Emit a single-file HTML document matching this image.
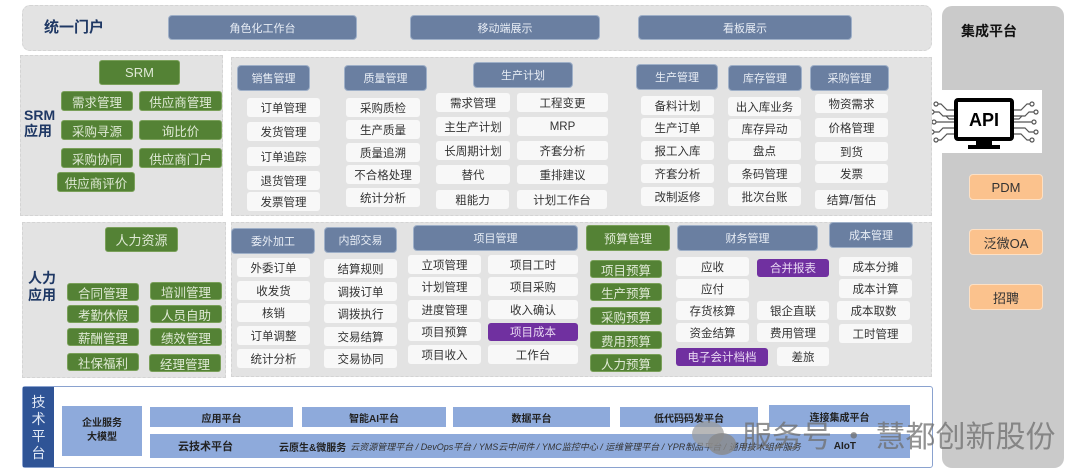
<!DOCTYPE html>
<html><head><meta charset="utf-8"><style>
*{margin:0;padding:0;box-sizing:border-box}
body{width:1080px;height:475px;background:#fff;position:relative;overflow:hidden;font-family:"Liberation Sans","Noto Sans CJK SC",sans-serif}
div{position:absolute}
.p{background:#e3e3e3;border:1px dashed #d4d4d4}
.h{background:#6a7fa1;color:#e8edf5;font-size:11px;text-align:center;border-radius:4px;border:1px solid #9fb0c8;display:flex;align-items:center;justify-content:center}
.i{background:#f8f8f8;color:#333;font-size:11.5px;text-align:center;border-radius:3px;display:flex;align-items:center;justify-content:center}
.g{background:#548235;color:#dfe9d5;font-size:12.5px;border-radius:3px;display:flex;align-items:center;justify-content:center;border:1px solid #7aa05a}
.u{background:#7030a0;color:#e8d8f2;font-size:11.5px;border-radius:3px;display:flex;align-items:center;justify-content:center}
.o{background:#fbc28d;color:#333;font-size:13px;border-radius:4px;border:1px solid #fde0c4;display:flex;align-items:center;justify-content:center}
.b{background:#8eaadb;color:#222;font-size:10px;font-weight:bold;display:flex;align-items:center;justify-content:center}
.t{font-weight:bold;color:#1f3864}
</style></head><body>
<div class="p" style="left:22px;top:5px;width:910px;height:46px;border-radius:8px"></div>
<div class="t" style="left:44px;top:16px;font-size:15px;color:#1f3864">统一门户</div>
<div class="h" style="left:168px;top:15px;width:189px;height:25px">角色化工作台</div>
<div class="h" style="left:410px;top:15px;width:190px;height:25px">移动端展示</div>
<div class="h" style="left:638px;top:15px;width:214px;height:25px">看板展示</div>
<div style="left:942px;top:6px;width:122px;height:462px;background:#cacaca;border-radius:10px"></div>
<div style="left:961px;top:21px;font-size:14px;font-weight:bold;color:#111">集成平台</div>
<div style="left:926px;top:90px;width:116px;height:63px;background:#fff">
<svg width="116" height="63" viewBox="0 0 116 63"><g stroke="#555" fill="none" stroke-width="1.2">
<path d="M29 20h-8l-6-6h-4M29 26h-12l-4-4h-6M29 32h-20M29 38h-12l-4 4h-6M29 44h-8l-6 6h-4M29 29h-6l-3-3"/>
<path d="M87 20h8l6-6h4M87 26h12l4-4h6M87 32h20M87 38h12l4 4h6M87 44h8l6 6h4M87 29h6l3-3"/>
<g fill="#fff"><circle cx="10" cy="14" r="2"/><circle cx="6" cy="22" r="2"/><circle cx="8" cy="32" r="2"/><circle cx="6" cy="42" r="2"/><circle cx="10" cy="50" r="2"/><circle cx="106" cy="14" r="2"/><circle cx="110" cy="22" r="2"/><circle cx="108" cy="32" r="2"/><circle cx="110" cy="42" r="2"/><circle cx="106" cy="50" r="2"/></g></g>
<rect x="30" y="10" width="56" height="39" fill="#fff" stroke="#000" stroke-width="4" rx="2"/>
<rect x="50" y="49" width="16" height="7" fill="#000"/><rect x="42" y="55" width="32" height="4" fill="#000"/>
<text x="58" y="36" text-anchor="middle" font-family="Liberation Sans" font-weight="bold" font-size="18" fill="#000">API</text></svg></div>
<div class="o" style="left:969px;top:174px;width:74px;height:26px">PDM</div>
<div class="o" style="left:969px;top:229px;width:74px;height:26px">泛微OA</div>
<div class="o" style="left:969px;top:284px;width:74px;height:26px">招聘</div>
<div class="p" style="left:20px;top:55px;width:203px;height:161px"></div>
<div class="t" style="left:24px;top:107px;font-size:14px;line-height:16px">SRM<br>应用</div>
<div class="g" style="left:99px;top:60px;width:81px;height:25px;font-size:13px">SRM</div>
<div class="g" style="left:61px;top:91px;width:72px;height:20px">需求管理</div>
<div class="g" style="left:139px;top:91px;width:83px;height:20px">供应商管理</div>
<div class="g" style="left:61px;top:120px;width:72px;height:20px">采购寻源</div>
<div class="g" style="left:139px;top:120px;width:83px;height:20px">询比价</div>
<div class="g" style="left:61px;top:148px;width:72px;height:20px">采购协同</div>
<div class="g" style="left:139px;top:148px;width:83px;height:20px">供应商门户</div>
<div class="g" style="left:57px;top:172px;width:78px;height:20px">供应商评价</div>
<div class="p" style="left:231px;top:57px;width:701px;height:159px"></div>
<div class="h" style="left:237px;top:65px;width:73px;height:26px">销售管理</div>
<div class="h" style="left:344px;top:65px;width:83px;height:26px">质量管理</div>
<div class="h" style="left:473px;top:62px;width:100px;height:26px">生产计划</div>
<div class="h" style="left:636px;top:64px;width:82px;height:26px">生产管理</div>
<div class="h" style="left:728px;top:65px;width:74px;height:26px">库存管理</div>
<div class="h" style="left:810px;top:65px;width:79px;height:26px">采购管理</div>
<div class="i" style="left:247px;top:98px;width:73px;height:19px">订单管理</div>
<div class="i" style="left:247px;top:122px;width:73px;height:19px">发货管理</div>
<div class="i" style="left:247px;top:147px;width:73px;height:19px">订单追踪</div>
<div class="i" style="left:247px;top:171px;width:73px;height:19px">退货管理</div>
<div class="i" style="left:247px;top:192px;width:73px;height:19px">发票管理</div>
<div class="i" style="left:346px;top:98px;width:74px;height:19px">采购质检</div>
<div class="i" style="left:346px;top:120px;width:74px;height:19px">生产质量</div>
<div class="i" style="left:346px;top:143px;width:74px;height:19px">质量追溯</div>
<div class="i" style="left:346px;top:165px;width:74px;height:19px">不合格处理</div>
<div class="i" style="left:346px;top:188px;width:74px;height:19px">统计分析</div>
<div class="i" style="left:436px;top:93px;width:74px;height:19px">需求管理</div>
<div class="i" style="left:436px;top:117px;width:74px;height:19px">主生产计划</div>
<div class="i" style="left:436px;top:141px;width:74px;height:19px">长周期计划</div>
<div class="i" style="left:436px;top:165px;width:74px;height:19px">替代</div>
<div class="i" style="left:436px;top:190px;width:73px;height:19px">粗能力</div>
<div class="i" style="left:517px;top:93px;width:91px;height:19px">工程变更</div>
<div class="i" style="left:517px;top:117px;width:91px;height:19px">MRP</div>
<div class="i" style="left:517px;top:141px;width:91px;height:19px">齐套分析</div>
<div class="i" style="left:517px;top:165px;width:91px;height:19px">重排建议</div>
<div class="i" style="left:517px;top:190px;width:90px;height:19px">计划工作台</div>
<div class="i" style="left:641px;top:96px;width:73px;height:19px">备料计划</div>
<div class="i" style="left:641px;top:118px;width:73px;height:19px">生产订单</div>
<div class="i" style="left:641px;top:141px;width:73px;height:19px">报工入库</div>
<div class="i" style="left:641px;top:164px;width:73px;height:19px">齐套分析</div>
<div class="i" style="left:641px;top:187px;width:73px;height:19px">改制返修</div>
<div class="i" style="left:728px;top:97px;width:73px;height:19px">出入库业务</div>
<div class="i" style="left:728px;top:119px;width:73px;height:19px">库存异动</div>
<div class="i" style="left:728px;top:141px;width:73px;height:19px">盘点</div>
<div class="i" style="left:728px;top:164px;width:73px;height:19px">条码管理</div>
<div class="i" style="left:728px;top:187px;width:73px;height:19px">批次台账</div>
<div class="i" style="left:815px;top:94px;width:73px;height:19px">物资需求</div>
<div class="i" style="left:815px;top:118px;width:73px;height:19px">价格管理</div>
<div class="i" style="left:815px;top:142px;width:73px;height:19px">到货</div>
<div class="i" style="left:815px;top:164px;width:73px;height:19px">发票</div>
<div class="i" style="left:815px;top:190px;width:73px;height:19px">结算/暂估</div>
<div class="p" style="left:22px;top:222px;width:204px;height:156px"></div>
<div class="t" style="left:28px;top:270px;font-size:14px;line-height:17px">人力<br>应用</div>
<div class="g" style="left:105px;top:227px;width:73px;height:25px;font-size:13px">人力资源</div>
<div class="g" style="left:67px;top:283px;width:72px;height:18px">合同管理</div>
<div class="g" style="left:150px;top:282px;width:72px;height:18px">培训管理</div>
<div class="g" style="left:67px;top:305px;width:72px;height:18px">考勤休假</div>
<div class="g" style="left:150px;top:305px;width:72px;height:18px">人员自助</div>
<div class="g" style="left:67px;top:328px;width:72px;height:18px">薪酬管理</div>
<div class="g" style="left:150px;top:328px;width:72px;height:18px">绩效管理</div>
<div class="g" style="left:67px;top:353px;width:72px;height:18px">社保福利</div>
<div class="g" style="left:149px;top:354px;width:72px;height:18px">经理管理</div>
<div class="p" style="left:231px;top:222px;width:701px;height:155px"></div>
<div class="h" style="left:231px;top:228px;width:84px;height:26px">委外加工</div>
<div class="h" style="left:324px;top:227px;width:73px;height:26px">内部交易</div>
<div class="h" style="left:413px;top:225px;width:165px;height:26px">项目管理</div>
<div class="g" style="left:586px;top:225px;width:84px;height:26px;font-size:12px">预算管理</div>
<div class="h" style="left:677px;top:225px;width:141px;height:26px">财务管理</div>
<div class="h" style="left:829px;top:222px;width:84px;height:26px">成本管理</div>
<div class="i" style="left:237px;top:258px;width:73px;height:19px">外委订单</div>
<div class="i" style="left:237px;top:281px;width:73px;height:19px">收发货</div>
<div class="i" style="left:237px;top:303px;width:73px;height:19px">核销</div>
<div class="i" style="left:237px;top:326px;width:73px;height:19px">订单调整</div>
<div class="i" style="left:237px;top:349px;width:73px;height:19px">统计分析</div>
<div class="i" style="left:324px;top:259px;width:73px;height:19px">结算规则</div>
<div class="i" style="left:324px;top:282px;width:73px;height:19px">调拨订单</div>
<div class="i" style="left:324px;top:304px;width:73px;height:19px">调拨执行</div>
<div class="i" style="left:324px;top:327px;width:73px;height:19px">交易结算</div>
<div class="i" style="left:324px;top:349px;width:73px;height:19px">交易协同</div>
<div class="i" style="left:408px;top:255px;width:73px;height:19px">立项管理</div>
<div class="i" style="left:408px;top:277px;width:73px;height:19px">计划管理</div>
<div class="i" style="left:408px;top:300px;width:73px;height:19px">进度管理</div>
<div class="i" style="left:408px;top:322px;width:73px;height:19px">项目预算</div>
<div class="i" style="left:408px;top:345px;width:73px;height:19px">项目收入</div>
<div class="i" style="left:488px;top:255px;width:90px;height:19px">项目工时</div>
<div class="i" style="left:488px;top:277px;width:90px;height:19px">项目采购</div>
<div class="i" style="left:488px;top:300px;width:90px;height:19px">收入确认</div>
<div class="u" style="left:488px;top:323px;width:90px;height:18px">项目成本</div>
<div class="i" style="left:488px;top:345px;width:90px;height:19px">工作台</div>
<div class="g" style="left:590px;top:260px;width:72px;height:18px">项目预算</div>
<div class="g" style="left:590px;top:283px;width:72px;height:18px">生产预算</div>
<div class="g" style="left:590px;top:307px;width:72px;height:18px">采购预算</div>
<div class="g" style="left:590px;top:331px;width:72px;height:18px">费用预算</div>
<div class="g" style="left:590px;top:354px;width:72px;height:18px">人力预算</div>
<div class="i" style="left:676px;top:257px;width:73px;height:19px">应收</div>
<div class="i" style="left:676px;top:279px;width:73px;height:19px">应付</div>
<div class="i" style="left:676px;top:301px;width:73px;height:19px">存货核算</div>
<div class="i" style="left:676px;top:323px;width:73px;height:19px">资金结算</div>
<div class="u" style="left:757px;top:259px;width:72px;height:18px">合并报表</div>
<div class="i" style="left:757px;top:301px;width:72px;height:19px">银企直联</div>
<div class="i" style="left:757px;top:323px;width:72px;height:19px">费用管理</div>
<div class="u" style="left:676px;top:348px;width:92px;height:18px">电子会计档档</div>
<div class="i" style="left:777px;top:347px;width:52px;height:19px">差旅</div>
<div class="i" style="left:839px;top:257px;width:73px;height:19px">成本分摊</div>
<div class="i" style="left:839px;top:279px;width:73px;height:19px">成本计算</div>
<div class="i" style="left:837px;top:301px;width:73px;height:19px">成本取数</div>
<div class="i" style="left:839px;top:324px;width:73px;height:19px">工时管理</div>
<div style="left:22px;top:386px;width:911px;height:82px;border:1.5px solid #8aa2cf;border-radius:3px;background:#fff"></div>
<div style="left:23px;top:387px;width:31px;height:80px;background:#2f5496;color:#e0e8f5;font-size:14px;line-height:17px;text-align:center;padding-top:7px">技<br>术<br>平<br>台</div>
<div class="b" style="left:62px;top:406px;width:80px;height:50px;flex-direction:column;line-height:14px"><span>企业服务</span><span>大模型</span></div>
<div class="b" style="left:150px;top:407px;width:143px;height:20px">应用平台</div>
<div class="b" style="left:302px;top:407px;width:144px;height:20px">智能AI平台</div>
<div class="b" style="left:453px;top:407px;width:157px;height:20px">数据平台</div>
<div class="b" style="left:620px;top:407px;width:138px;height:20px">低代码码发平台</div>
<div class="b" style="left:769px;top:405px;width:141px;height:22px">连接集成平台</div>
<div class="b" style="left:150px;top:434px;width:760px;height:24px;justify-content:flex-start">
<span style="margin-left:28px;font-size:11px">云技术平台</span>
<span style="margin-left:46px">云原生&amp;微服务</span>
<span style="margin-left:4px;font-weight:normal;font-style:italic;font-size:9px;color:#333">云资源管理平台 / DevOps平台 / YMS云中间件 / YMC监控中心 / 运维管理平台 / YPR制品平台 / 通用技术组件服务</span>
<span style="margin-left:33px">AIoT</span></div>
<svg style="position:absolute;left:690px;top:418px" width="48" height="40"><ellipse cx="18" cy="16" rx="16" ry="13" fill="#9a9a9a" opacity=".7"/><ellipse cx="32" cy="26" rx="14" ry="11" fill="#8a8a8a" opacity=".8"/></svg>
<div style="left:742px;top:412px;font-size:30px;color:rgba(110,110,110,.75);white-space:nowrap;font-family:'Noto Sans CJK SC',sans-serif">服务号 · 慧都创新股份</div>
</body></html>
